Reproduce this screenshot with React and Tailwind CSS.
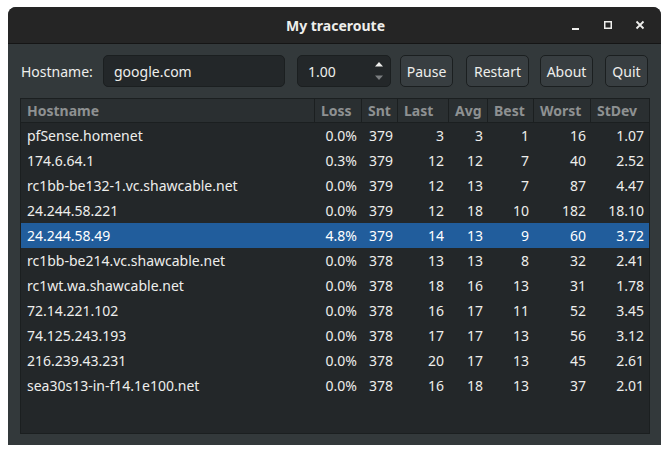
import React from "react";

const rows = [
  ["pfSense.homenet", "0.0%", "379", "3", "3", "1", "16", "1.07"],
  ["174.6.64.1", "0.3%", "379", "12", "12", "7", "40", "2.52"],
  ["rc1bb-be132-1.vc.shawcable.net", "0.0%", "379", "12", "13", "7", "87", "4.47"],
  ["24.244.58.221", "0.0%", "379", "12", "18", "10", "182", "18.10"],
  ["24.244.58.49", "4.8%", "379", "14", "13", "9", "60", "3.72"],
  ["rc1bb-be214.vc.shawcable.net", "0.0%", "378", "13", "13", "8", "32", "2.41"],
  ["rc1wt.wa.shawcable.net", "0.0%", "378", "18", "16", "13", "31", "1.78"],
  ["72.14.221.102", "0.0%", "378", "16", "17", "11", "52", "3.45"],
  ["74.125.243.193", "0.0%", "378", "17", "17", "13", "56", "3.12"],
  ["216.239.43.231", "0.0%", "378", "20", "17", "13", "45", "2.61"],
  ["sea30s13-in-f14.1e100.net", "0.0%", "378", "16", "18", "13", "37", "2.01"],
];

const headers = ["Hostname", "Loss", "Snt", "Last", "Avg", "Best", "Worst", "StDev"];
const cols = "grid grid-cols-[294px_47px_36px_51px_39px_46px_57px_58px]";

function Button({ children, w }) {
  return (
    <button className={`h-[32px] ${w} rounded-[5px] border border-[#1b1f20] bg-[#383e41] text-[#eeeeec] text-[14px] flex items-center justify-center`}>
      {children}
    </button>
  );
}

export default function App() {
  return (
    <div className="w-[670px] h-[455px] bg-white pt-[7px] pl-[8px]" style={{ fontFamily: '"Noto Sans", sans-serif' }}>
      <div className="w-[653px] h-[438px] rounded-t-[8px] overflow-hidden bg-[#33393b] flex flex-col">
        {/* title bar */}
        <div className="h-[37px] bg-[#252525] border-b border-[#151515] flex items-center relative shrink-0">
          <div className="flex-1 text-center text-[14px] font-bold text-[#eeeeec] pl-[2px]">My traceroute</div>
          <div className="absolute right-[16px] top-[13px] flex items-center gap-[22px]">
            <svg width="10" height="10" viewBox="0 0 10 10"><rect x="1" y="8" width="7" height="2" fill="#eeeeec" /></svg>
            <svg width="10" height="10" viewBox="0 0 10 10"><rect x="1.75" y="1.75" width="6.5" height="6.5" fill="none" stroke="#eeeeec" strokeWidth="1.5" /></svg>
            <svg width="10" height="10" viewBox="0 0 10 10"><path d="M1.5 1.5L8.5 8.5M8.5 1.5L1.5 8.5" stroke="#eeeeec" strokeWidth="1.8" /></svg>
          </div>
        </div>

        {/* controls */}
        <div className="flex items-center mt-[11px] pl-[13px] h-[32px] shrink-0">
          <span className="text-[14px] text-[#eeeeec] w-[82px]">Hostname:</span>
          <div className="w-[182px] h-[32px] rounded-[5px] border border-[#1b1f20] bg-[#232729] text-[14px] text-[#eeeeec] flex items-center pl-[10px]">google.com</div>
          <div className="ml-[12px] w-[94px] h-[32px] rounded-[5px] border border-[#1b1f20] bg-[#232729] text-[14px] text-[#eeeeec] flex items-center pl-[10px] relative">
            1.00
            <div className="absolute right-[6px] top-[5px] flex flex-col gap-[8px]">
              <svg width="10" height="6" viewBox="0 0 10 6"><path d="M1 5.5L5 1L9 5.5Z" fill="#eeeeec" /></svg>
              <svg width="10" height="6" viewBox="0 0 10 6"><path d="M1 0.5L5 5L9 0.5Z" fill="#7b7e80" /></svg>
            </div>
          </div>
          <div className="ml-[9px]"><Button w="w-[53px]">Pause</Button></div>
          <div className="ml-[13px]"><Button w="w-[63px]">Restart</Button></div>
          <div className="ml-[11px]"><Button w="w-[53px]">About</Button></div>
          <div className="ml-[12px]"><Button w="w-[43px]">Quit</Button></div>
        </div>

        {/* table */}
        <div className="mt-[11px] ml-[12px] w-[630px] h-[336px] border border-[#1b1f20] bg-[#232729] text-[14px]">
          <div className={`${cols} h-[24px] bg-[#2a2f31] border-b border-[#1b1f20]`}>
            {headers.map((h, i) => (
              <div
                key={h}
                className={`flex items-center pl-[6px] font-bold text-[#8e9192] ${i < headers.length - 1 ? "border-r border-[#1b1f20]" : ""}`}
              >
                {h}
              </div>
            ))}
          </div>
          {rows.map((r, ri) => (
            <div key={ri} className={`${cols} h-[25px] ${ri === 4 ? "bg-[#215d9c] text-white" : "text-[#eeeeec]"}`}>
              {r.map((c, ci) => (
                <div key={ci} className={`flex items-center ${ci === 0 ? "pl-[6px]" : "justify-end pr-[5px]"}`}>
                  {c}
                </div>
              ))}
            </div>
          ))}
        </div>
      </div>
    </div>
  );
}
